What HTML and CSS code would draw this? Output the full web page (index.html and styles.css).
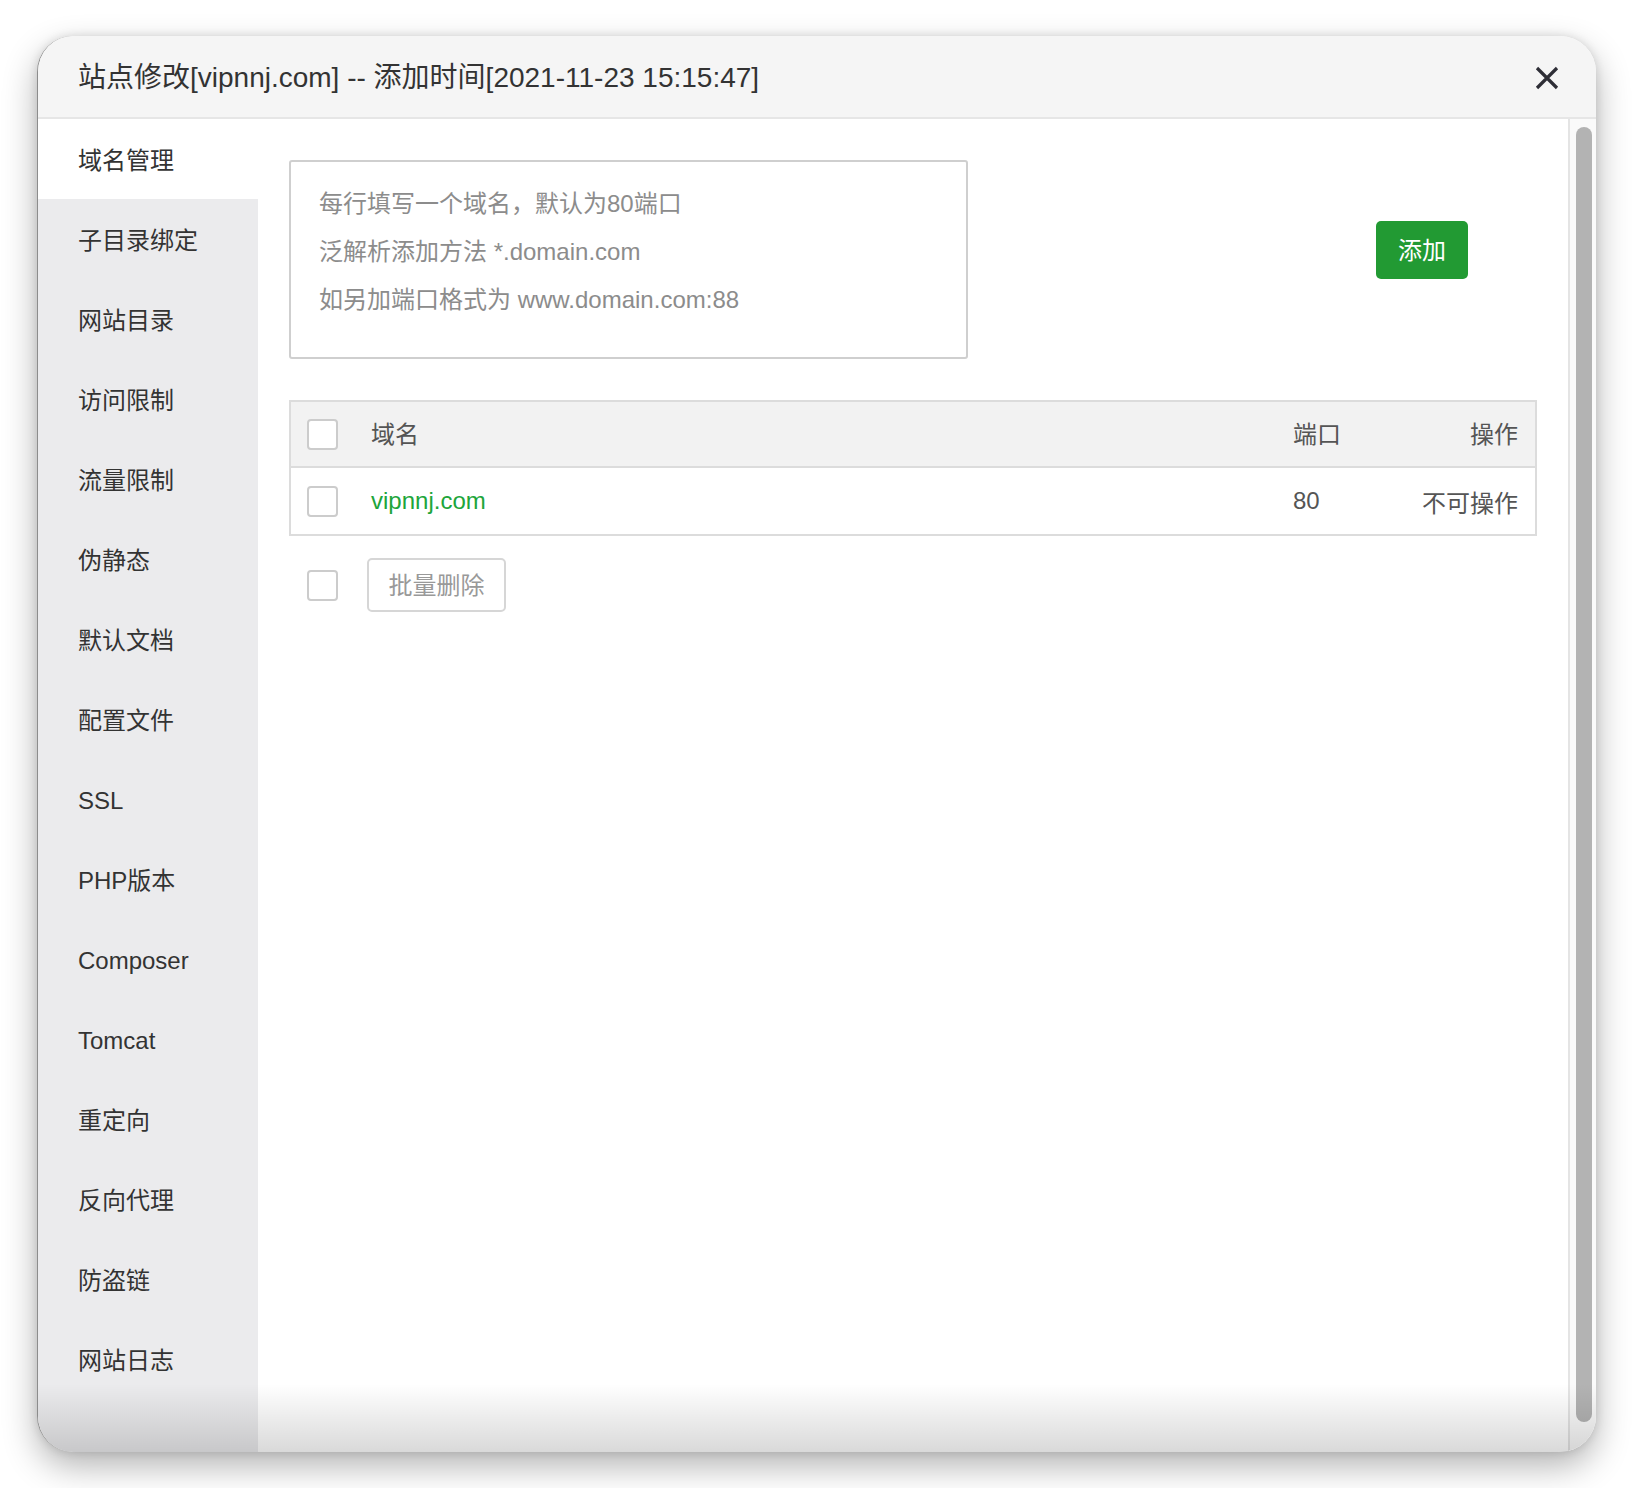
FILE: index.html
```html
<!DOCTYPE html>
<html lang="zh-CN">
<head>
<meta charset="utf-8">
<title>站点修改</title>
<link rel="stylesheet" href="styles.css">
</head>
<body>
<div class="stage">
  <div class="dialog">
    <div class="dlg-head">
      <span class="dlg-title">站点修改[vipnnj.com] -- 添加时间[2021-11-23 15:15:47]</span>
      <span class="dlg-close" aria-label="关闭">
        <svg width="24" height="24" viewBox="0 0 24 24"><path d="M2 2 L22 22 M22 2 L2 22" stroke="#2e2e36" stroke-width="3.2" stroke-linecap="butt" fill="none"/></svg>
      </span>
    </div>
    <div class="dlg-body">
      <ul class="side">
        <li class="active">域名管理</li>
        <li>子目录绑定</li>
        <li>网站目录</li>
        <li>访问限制</li>
        <li>流量限制</li>
        <li>伪静态</li>
        <li>默认文档</li>
        <li>配置文件</li>
        <li>SSL</li>
        <li>PHP版本</li>
        <li>Composer</li>
        <li>Tomcat</li>
        <li>重定向</li>
        <li>反向代理</li>
        <li>防盗链</li>
        <li>网站日志</li>
      </ul>
      <div class="main">
        <div class="add-row">
          <div class="domain-input">
            <p>每行填写一个域名，默认为80端口</p>
            <p>泛解析添加方法 *.domain.com</p>
            <p>如另加端口格式为 www.domain.com:88</p>
          </div>
          <button class="btn-add">添加</button>
        </div>
        <div class="dtable">
          <div class="trow thead">
            <span class="cell"><span class="cb"></span></span>
            <span class="cell">域名</span>
            <span class="cell">端口</span>
            <span class="cell right">操作</span>
          </div>
          <div class="trow">
            <span class="cell"><span class="cb"></span></span>
            <span class="cell link">vipnnj.com</span>
            <span class="cell">80</span>
            <span class="cell right">不可操作</span>
          </div>
        </div>
        <div class="batch">
          <span class="cb"></span>
          <button class="btn-batch">批量删除</button>
        </div>
      </div>
      <div class="vscroll"><div class="thumb"></div></div>
    </div>
    <div class="fade"></div>
  </div>
</div>
</body>
</html>
```
FILE: styles.css
```css
* { box-sizing: border-box; }
html, body { margin: 0; padding: 0; background: #ffffff; }
body {
  font-family: "Liberation Sans", "Noto Sans CJK SC", sans-serif;
  color: #333;
  width: 1632px;
  height: 1488px;
  overflow: hidden;
}
.stage {
  padding: 36px 0 0 37px;
}
.dialog {
  position: relative;
  width: 1559px;
  height: 1416px;
  border-radius: 36px;
  overflow: hidden;
  background: #fff;
  display: flex;
  flex-direction: column;
  box-shadow: 0 14px 34px rgba(0,0,0,0.30), 0 0 10px rgba(0,0,0,0.12);
  border-left: 1px solid #8c8c8c;
}
.dlg-head {
  height: 83px;
  flex: none;
  background: #f5f5f5;
  border-bottom: 2px solid #e6e6e6;
  display: flex;
  align-items: center;
  padding: 0 37px 3px 40px;
}
.dlg-title {
  font-size: 28px;
  color: #333;
  flex: 1;
  white-space: nowrap;
  letter-spacing: 0;
}
.dlg-close {
  width: 24px;
  height: 24px;
  display: flex;
  margin-top: 5px;
}
.dlg-body {
  flex: 1;
  display: flex;
  min-height: 0;
}
.side {
  list-style: none;
  margin: 0;
  padding: 0;
  width: 220px;
  flex: none;
  background: #ebebed;
}
.side li {
  height: 80px;
  line-height: 80px;
  padding: 2px 0 0 40px;
  font-size: 24px;
  color: #333;
  white-space: nowrap;
}
.side li.active { background: #fff; }
.main {
  flex: 1;
  padding: 41px 31px 0 31px;
}
.add-row {
  display: flex;
  align-items: flex-start;
}
.domain-input {
  width: 679px;
  height: 199px;
  border: 2px solid #cfcfcf;
  border-radius: 3px;
  padding: 18px 0 0 28px;
}
.domain-input p {
  margin: 0;
  font-size: 24px;
  line-height: 48px;
  color: #8c8c8c;
  white-space: nowrap;
}
.btn-add {
  margin: 61px 69px 0 auto;
  width: 92px;
  height: 58px;
  border: none;
  border-radius: 5px;
  background: #229a33;
  color: #fff;
  font-family: inherit;
  font-size: 24px;
  padding: 0 0 3px 0;
}
.dtable {
  margin-top: 41px;
  border: 2px solid #dcdcdc;
}
.trow {
  display: grid;
  grid-template-columns: 80px 1fr 125px 100px;
  align-items: center;
  height: 66px;
  padding-right: 17px;
  font-size: 24px;
  color: #555;
}
.thead {
  background: #f2f2f2;
  border-bottom: 2px solid #dcdcdc;
}
.thead .cell { margin-top: -3px; }
.thead .cell:first-child { margin-top: 0; }
.cell { display: flex; align-items: center; white-space: nowrap; }
.cell.right { justify-content: flex-end; }
.cell.link { color: #20a53a; }
.cb {
  display: inline-block;
  width: 31px;
  height: 31px;
  border: 2px solid #cccccc;
  border-radius: 4px;
  background: #fff;
  margin-left: 16px;
}
.batch {
  display: flex;
  align-items: center;
  margin-top: 22px;
}
.batch .cb { margin-left: 18px; }
.btn-batch {
  margin-left: 29px;
  width: 139px;
  height: 54px;
  border: 2px solid #d6d6d6;
  border-radius: 5px;
  background: #fff;
  color: #999;
  font-family: inherit;
  font-size: 24px;
  padding: 0 0 3px 0;
}
.vscroll {
  width: 28px;
  flex: none;
  border-left: 2px solid #e4e4e4;
  background: #fafafa;
  padding: 8px 4px 0 6px;
}
.thumb {
  width: 16px;
  height: 1295px;
  border-radius: 8px;
  background: #b3b3b3;
}
.fade {
  position: absolute;
  left: 0;
  right: 0;
  bottom: 0;
  height: 68px;
  background: linear-gradient(to bottom, rgba(0,0,0,0), rgba(0,0,0,0.15));
  pointer-events: none;
}
```
